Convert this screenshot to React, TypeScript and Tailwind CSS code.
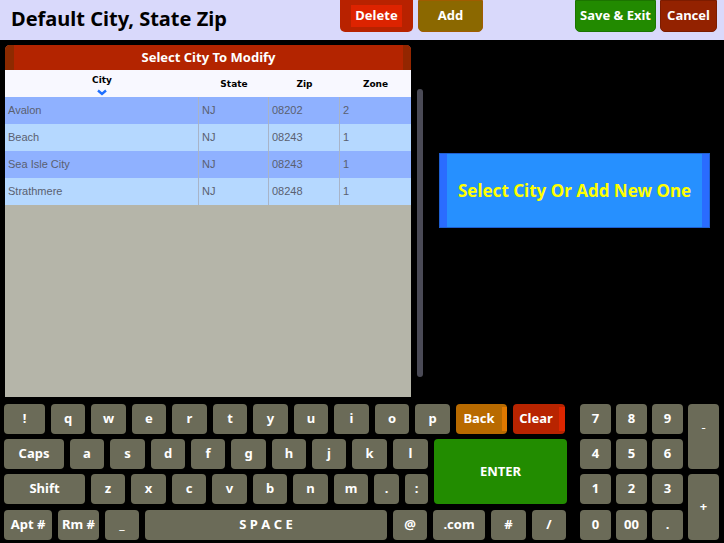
import { ReactNode } from "react"

const font = { fontFamily: '"Noto Sans", "Open Sans", sans-serif' }

type KeyProps = { label: string; w: string; h?: string; tone?: string; className?: string }

const Key = ({ label, w, h = "h-[30px]", tone = "bg-[#6b6b58]", className = "" }: KeyProps) => (
    <div className={`${w} ${h} ${tone} ${className} shrink-0 rounded-[4px] flex items-center justify-center text-white text-[13px] font-bold`}>
        {label}
    </div>
)

const Row = ({ children }: { children: ReactNode }) => <div className="flex gap-[6px]">{children}</div>

const rows = [
    { city: "Avalon", state: "NJ", zip: "08202", zone: "2", bg: "bg-[#8fb1ff]" },
    { city: "Beach", state: "NJ", zip: "08243", zone: "1", bg: "bg-[#b5d8ff]" },
    { city: "Sea Isle City", state: "NJ", zip: "08243", zone: "1", bg: "bg-[#8fb1ff]" },
    { city: "Strathmere", state: "NJ", zip: "08248", zone: "1", bg: "bg-[#b5d8ff]" },
]

const CityTable = () => (
    <div className="w-[406px] h-[352px] flex flex-col bg-[#b5b5a9] overflow-hidden rounded-t-[5px]">
        <div className="h-[25px] flex bg-[#b32400]">
            <div className="w-[9px] bg-[#8d2a00]" />
            <div className="flex-1 flex items-center justify-center text-white text-[13px] font-bold">Select City To Modify</div>
            <div className="w-[8px] bg-[#932600]" />
        </div>
        <div className="h-[27px] bg-[#f8f8ff] flex text-[9px] font-bold text-black" style={{ fontFamily: '"DejaVu Sans", sans-serif' }}>
            <div className="w-[194px] flex flex-col items-center pt-[4px]">
                <span>City</span>
                <svg width="10" height="7" viewBox="0 0 10 7" className="mt-[1px]">
                    <path d="M1 1.5 L5 5 L9 1.5" stroke="#1f6fff" strokeWidth="2.4" fill="none" />
                </svg>
            </div>
            <div className="w-[70px] flex justify-center pt-[8px]">State</div>
            <div className="w-[71px] flex justify-center pt-[8px]">Zip</div>
            <div className="flex-1 flex justify-center pt-[8px]">Zone</div>
        </div>
        {rows.map((r) => (
            <div key={r.city} className={`h-[27px] flex text-[11px] text-[#5a6070] ${r.bg}`} style={{ fontFamily: '"Liberation Sans", Arial, sans-serif' }}>
                <div className="w-[194px] pl-[3px] flex items-center border-r border-[#a8b4c8]">{r.city}</div>
                <div className="w-[70px] pl-[3px] flex items-center border-r border-[#a8b4c8]">{r.state}</div>
                <div className="w-[71px] pl-[3px] flex items-center border-r border-[#a8b4c8]">{r.zip}</div>
                <div className="flex-1 pl-[3px] flex items-center">{r.zone}</div>
            </div>
        ))}
    </div>
)

const Keyboard = () => (
    <div className="flex pl-[4px] pt-[7px]">
        <div className="flex flex-col gap-[5px]">
            <Row>
                <Key label="!" w="w-[41px]" />
                {["q", "w", "e", "r", "t", "y", "u", "i", "o", "p"].map((k, i) => (
                    <Key key={k} label={k} w={i % 2 ? "w-[35px]" : "w-[34px]"} />
                ))}
                <div className="w-[51px] h-[30px] rounded-[4px] bg-[#b86a00] flex text-white text-[13px] font-bold overflow-hidden">
                    <div className="flex-1 flex items-center justify-center">Back</div>
                    <div className="w-[5px] bg-[#e07800] my-[3px]" />
                </div>
                <div className="w-[52px] h-[30px] rounded-[4px] bg-[#b82400] flex text-white text-[13px] font-bold overflow-hidden">
                    <div className="flex-1 flex items-center justify-center">Clear</div>
                    <div className="w-[6px] bg-[#dd2600] my-[3px]" />
                </div>
            </Row>
            <div className="flex gap-[6px]">
                <div className="flex flex-col gap-[5px]">
                    <Row>
                        <Key label="Caps" w="w-[60px]" />
                        {["a", "s", "d", "f", "g", "h", "j", "k", "l"].map((k, i) => (
                            <Key key={k} label={k} w={i % 3 === 1 || i === 8 ? "w-[35px]" : "w-[34px]"} />
                        ))}
                    </Row>
                    <Row>
                        <Key label="Shift" w="w-[81px]" />
                        {["z", "x", "c", "v", "b", "n", "m"].map((k, i) => (
                            <Key key={k} label={k} w={i % 2 ? "w-[35px]" : "w-[34px]"} />
                        ))}
                        <Key label="." w="w-[25px]" />
                        <Key label=":" w="w-[23px]" />
                    </Row>
                </div>
                <Key label="ENTER" w="w-[133px]" h="h-[65px]" tone="bg-[#228c00]" />
            </div>
            <div className="flex gap-[6px] mt-[1px]">
                <Key label="Apt #" w="w-[48px]" />
                <Key label="Rm #" w="w-[41px]" />
                <Key label="_" w="w-[34px]" />
                <Key label="S P A C E" w="w-[242px]" />
                <Key label="@" w="w-[34px]" />
                <Key label=".com" w="w-[52px]" />
                <Key label="#" w="w-[35px]" />
                <Key label="/" w="w-[34px]" />
            </div>
        </div>
        <div className="ml-[13px] grid grid-cols-[31px_31px_31px_31px] grid-rows-[30px_30px_30px_31px] gap-x-[5px] gap-y-[5px]">
            {["7", "8", "9"].map((k) => <Key key={k} label={k} w="w-[31px]" />)}
            <Key label="-" w="w-[31px]" h="h-[65px]" className="row-span-2 !items-start pt-[14px] font-normal" />
            {["4", "5", "6", "1", "2", "3"].map((k) => <Key key={k} label={k} w="w-[31px]" />)}
            <Key label="+" w="w-[31px]" h="h-[66px]" className="row-span-2 col-start-4 row-start-3" />
            {["0", "00", "."].map((k) => <Key key={k} label={k} w="w-[31px]" h="h-[30px]" className="self-end" />)}
        </div>
    </div>
)

export default function App() {
    return (
        <div className="w-[724px] h-[543px] bg-black overflow-hidden" style={font}>
            <div className="h-[40px] bg-[#d9d9fb] flex">
                <div className="w-[340px] pl-[11px] pt-[4px] text-[20px] font-bold text-black">Default City, State Zip</div>
                <div className="w-[73px] h-[32px] bg-[#b82200] rounded-b-[5px] flex items-center justify-center">
                    <div className="w-[51px] h-[22px] bg-[#dd2300] flex items-center justify-center text-white text-[13px] font-bold">Delete</div>
                </div>
                <div className="ml-[5px] w-[65px] h-[32px] bg-[#8b6800] border border-[#a05c00] rounded-b-[5px] flex items-center justify-center text-white text-[13px] font-bold">Add</div>
                <div className="ml-[92px] w-[81px] h-[32px] bg-[#228a00] border border-[#1c7400] rounded-b-[5px] flex items-center justify-center text-white text-[13px] font-bold">Save &amp; Exit</div>
                <div className="ml-[4px] w-[57px] h-[32px] bg-[#932200] border border-[#7c1c00] rounded-b-[5px] flex items-center justify-center text-white text-[13px] font-bold">Cancel</div>
            </div>
            <div className="flex pl-[5px] pt-[5px]">
                <CityTable />
                <div className="ml-[6px] mt-[44px] w-[6px] h-[288px] rounded-full bg-[#4a4a56]" />
                <div className="ml-[16px] mt-[108px] w-[271px] h-[75px] bg-[#2690ff] border border-[#1f5fd0] flex">
                    <div className="w-[7px] bg-[#2a6cff]" />
                    <div className="flex-1 flex items-center justify-center text-[#ffff00] text-[17px] font-bold">Select City Or Add New One</div>
                    <div className="w-[7px] bg-[#2a6cff]" />
                </div>
            </div>
            <Keyboard />
        </div>
    )
}
